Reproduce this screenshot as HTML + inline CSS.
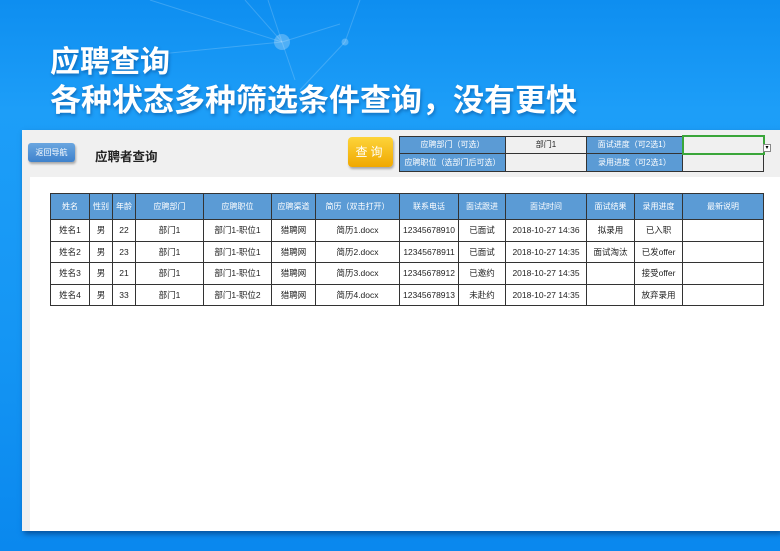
<!DOCTYPE html>
<html><head><meta charset="utf-8"><style>
*{margin:0;padding:0;box-sizing:border-box}
body{width:780px;height:551px;overflow:hidden;position:relative;background:linear-gradient(180deg,#0e8ef0 0%,#1d9ef8 20%,#1596f4 60%,#0a88ee 100%);font-family:"Liberation Sans","Noto Sans CJK SC",sans-serif}
.t{position:absolute;left:50px;color:#fff;font-weight:bold;text-shadow:1px 2px 3px rgba(0,40,100,.4);white-space:nowrap}
.panel{position:absolute;left:22px;top:130px;width:758px;height:401px;background:#f0f0f0;box-shadow:2px 3px 5px rgba(0,30,80,.5)}
.inner{position:absolute;left:8px;top:47px;right:0;bottom:0;background:#fff}
.btn{position:absolute;left:6px;top:13px;width:47px;height:19px;background:linear-gradient(#6aa6e0,#3f82cc);border-radius:3px;color:#fff;font-size:8px;text-align:center;line-height:19px;box-shadow:1px 2px 2px rgba(0,0,0,.3)}
.ttl{position:absolute;left:73px;top:16px;font-size:12.5px;font-weight:bold;color:#222}
.q{position:absolute;left:326px;top:7px;width:45px;height:30px;background:linear-gradient(#fdd43a,#f0a800);border-radius:4px;color:#fff;font-size:12px;text-align:center;line-height:30px;letter-spacing:3px;box-shadow:1px 2px 2px rgba(0,0,0,.3)}
table{position:absolute;border-collapse:collapse;table-layout:fixed}
td{border:1px solid #333;text-align:center;font-size:8.5px;color:#222;overflow:hidden;white-space:nowrap}
.h td{background:#5b9bd5;color:#fff;font-size:8px}
.f td{height:17.5px;font-size:8px}
.f td.b{background:#5b9bd5;color:#fff}
.f td.g{background:#f0f0f0}
.m td{height:21.5px}
.m .h td{height:26px}
</style></head><body>
<svg style="position:absolute;left:0;top:0" width="780" height="551">
<g stroke="rgba(255,255,255,.18)" stroke-width="1" fill="none">
<line x1="150" y1="0" x2="282" y2="42"/><line x1="282" y1="42" x2="340" y2="24"/><line x1="282" y1="42" x2="245" y2="0"/><line x1="282" y1="42" x2="268" y2="0"/><line x1="282" y1="42" x2="150" y2="55"/><line x1="345" y1="42" x2="360" y2="0"/><line x1="345" y1="42" x2="300" y2="90"/><line x1="282" y1="42" x2="295" y2="80"/>
</g>
<circle cx="282" cy="42" r="8" fill="rgba(255,255,255,.25)"/><circle cx="345" cy="42" r="3.5" fill="rgba(255,255,255,.25)"/>
</svg>
<div class="t" style="top:37px;font-size:30px">应聘查询</div>
<div class="t" style="top:75px;font-size:31px">各种状态多种筛选条件查询，没有更快</div>
<div class="panel">
<div class="btn">返回导航</div>
<div class="ttl">应聘者查询</div>
<div class="q">查询</div>
<table class="f" style="left:377px;top:5px;width:364px">
<colgroup><col style="width:106px"><col style="width:81px"><col style="width:96px"><col style="width:81px"></colgroup>
<tr><td class="b">应聘部门（可选）</td><td class="g">部门1</td><td class="b">面试进度（可2选1）</td><td class="g" style="border:2px solid #3aa63a;background:#f0f0f0"></td></tr>
<tr><td class="b">应聘职位（选部门后可选）</td><td class="g"></td><td class="b">录用进度（可2选1）</td><td class="g"></td></tr>
</table>
<div style="position:absolute;left:741px;top:14px;width:8px;height:8px;background:#fff;border:1px solid #888;font-size:6px;line-height:6px;text-align:center">▾</div>
<div class="inner"></div>
<table class="m" style="left:28px;top:63px;width:713px">
<colgroup><col style="width:39px"><col style="width:23px"><col style="width:23px"><col style="width:68px"><col style="width:68px"><col style="width:44px"><col style="width:84px"><col style="width:59px"><col style="width:47px"><col style="width:81px"><col style="width:48px"><col style="width:48px"><col style="width:81px"></colgroup>
<tr class="h"><td>姓名</td><td>性别</td><td>年龄</td><td>应聘部门</td><td>应聘职位</td><td>应聘渠道</td><td>简历（双击打开）</td><td>联系电话</td><td>面试跟进</td><td>面试时间</td><td>面试结果</td><td>录用进度</td><td>最新说明</td></tr>
<tr><td>姓名1</td><td>男</td><td>22</td><td>部门1</td><td>部门1-职位1</td><td>猎聘网</td><td>简历1.docx</td><td>12345678910</td><td>已面试</td><td>2018-10-27 14:36</td><td>拟录用</td><td>已入职</td><td></td></tr>
<tr><td>姓名2</td><td>男</td><td>23</td><td>部门1</td><td>部门1-职位1</td><td>猎聘网</td><td>简历2.docx</td><td>12345678911</td><td>已面试</td><td>2018-10-27 14:35</td><td>面试淘汰</td><td>已发offer</td><td></td></tr>
<tr><td>姓名3</td><td>男</td><td>21</td><td>部门1</td><td>部门1-职位1</td><td>猎聘网</td><td>简历3.docx</td><td>12345678912</td><td>已邀约</td><td>2018-10-27 14:35</td><td></td><td>接受offer</td><td></td></tr>
<tr><td>姓名4</td><td>男</td><td>33</td><td>部门1</td><td>部门1-职位2</td><td>猎聘网</td><td>简历4.docx</td><td>12345678913</td><td>未赴约</td><td>2018-10-27 14:35</td><td></td><td>放弃录用</td><td></td></tr>
</table>
</div>
</body></html>
